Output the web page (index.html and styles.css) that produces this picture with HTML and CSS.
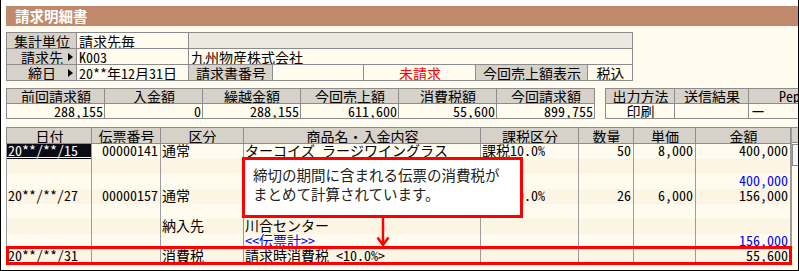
FILE: index.html
```html
<!DOCTYPE html>
<html lang="ja">
<head>
    <meta charset="UTF-8">
    <title>請求明細書</title>
    <link rel="stylesheet" href="styles.css">
</head>
<body>
<div class="frame">
    <div class="panel">
        <div class="titlebar">請求明細書</div>

        <!-- header info -->
        <table class="grid info">
            <colgroup>
                <col class="w70"><col class="w112"><col class="w84"><col class="w91"><col class="w112"><col class="w112"><col class="w45">
            </colgroup>
            <tr>
                <th class="lbl">集計単位</th>
                <td>請求先毎</td>
                <td class="pale" colspan="5"></td>
            </tr>
            <tr>
                <th class="lbl arrow">請求先</th>
                <td>K003</td>
                <td colspan="5">九州物産株式会社</td>
            </tr>
            <tr>
                <th class="lbl arrow">締日</th>
                <td>20**年12月31日</td>
                <th class="lbl">請求書番号</th>
                <td></td>
                <td class="center red">未請求</td>
                <th class="lbl">今回売上額表示</th>
                <td class="center">税込</td>
            </tr>
        </table>

        <!-- totals -->
        <div class="totals">
            <table class="grid sums">
                <colgroup>
                    <col class="w98"><col class="w98"><col class="w98"><col class="w98"><col class="w98"><col class="w98">
                </colgroup>
                <tr>
                    <th class="lbl">前回請求額</th>
                    <th class="lbl">入金額</th>
                    <th class="lbl">繰越金額</th>
                    <th class="lbl">今回売上額</th>
                    <th class="lbl">消費税額</th>
                    <th class="lbl">今回請求額</th>
                </tr>
                <tr>
                    <td class="right">288,155</td>
                    <td class="right">0</td>
                    <td class="right">288,155</td>
                    <td class="right">611,600</td>
                    <td class="right">55,600</td>
                    <td class="right">899,755</td>
                </tr>
            </table>
            <table class="grid output">
                <colgroup>
                    <col class="w69"><col class="w74"><col class="w102">
                </colgroup>
                <tr>
                    <th class="lbl">出力方法</th>
                    <th class="lbl">送信結果</th>
                    <th class="lbl">Peppol</th>
                </tr>
                <tr>
                    <td class="center">印刷</td>
                    <td></td>
                    <td>ー</td>
                </tr>
            </table>
        </div>

        <!-- detail lines -->
        <div class="detail">
            <table class="grid lines">
                <colgroup>
                    <col class="w85"><col class="w69"><col class="w83"><col class="w237"><col class="w98"><col class="w55"><col class="w62"><col class="w95">
                </colgroup>
                <thead>
                    <tr>
                        <th class="lbl">日付</th>
                        <th class="lbl">伝票番号</th>
                        <th class="lbl">区分</th>
                        <th class="lbl">商品名・入金内容</th>
                        <th class="lbl">課税区分</th>
                        <th class="lbl">数量</th>
                        <th class="lbl">単価</th>
                        <th class="lbl">金額</th>
                    </tr>
                </thead>
                <tbody>
                    <tr>
                        <td class="sel">20**/**/15</td>
                        <td class="right">00000141</td>
                        <td>通常</td>
                        <td>ターコイズ ラージワイングラス</td>
                        <td>課税10.0%</td>
                        <td class="right">50</td>
                        <td class="right">8,000</td>
                        <td class="right">400,000</td>
                    </tr>
                    <tr class="alt">
                        <td></td><td></td><td></td><td></td><td></td><td></td><td></td><td></td>
                    </tr>
                    <tr>
                        <td></td><td></td><td></td><td></td><td></td><td></td><td></td>
                        <td class="right blue">400,000</td>
                    </tr>
                    <tr class="alt">
                        <td>20**/**/27</td>
                        <td class="right">00000157</td>
                        <td>通常</td>
                        <td>ターコイズ ショットグラス</td>
                        <td>課税10.0%</td>
                        <td class="right">26</td>
                        <td class="right">6,000</td>
                        <td class="right">156,000</td>
                    </tr>
                    <tr>
                        <td></td><td></td><td></td><td></td><td></td><td></td><td></td><td></td>
                    </tr>
                    <tr class="alt">
                        <td></td><td></td>
                        <td>納入先</td>
                        <td>川合センター</td>
                        <td></td><td></td><td></td><td></td>
                    </tr>
                    <tr>
                        <td></td><td></td><td></td>
                        <td class="blue">&lt;&lt;伝票計&gt;&gt;</td>
                        <td></td><td></td><td></td>
                        <td class="right blue">156,000</td>
                    </tr>
                    <tr class="alt">
                        <td>20**/**/31</td>
                        <td></td>
                        <td>消費税</td>
                        <td>請求時消費税 &lt;10.0%&gt;</td>
                        <td></td><td></td><td></td>
                        <td class="right">55,600</td>
                    </tr>
                </tbody>
            </table>
            <div class="vscroll">
                <div class="vscroll-head"></div>
                <div class="vscroll-thumb"></div>
            </div>
        </div>

        <!-- annotation -->
        <div class="callout">締切の期間に含まれる伝票の消費税が<br>まとめて計算されています。</div>
        <svg class="pointer" width="20" height="30" viewBox="0 0 20 30">
            <line x1="7" y1="0" x2="7" y2="27" stroke="#f00" stroke-width="2.5"/>
            <polyline points="1.5,19.5 7,27 12.5,19.5" fill="none" stroke="#f00" stroke-width="2.5"/>
        </svg>
        <div class="mark"></div>
    </div>
</div>
</body>
</html>
```

FILE: styles.css
```css
* {
    box-sizing: border-box;
}

body {
    margin: 0;
    background: #fff;
    font-family: "Noto Sans Mono CJK JP", "Noto Sans CJK JP", monospace;
    font-size: 14px;
    color: #000;
}

.frame {
    width: 799px;
    height: 271px;
    border: 1px solid #000;
    border-top: 0;
    padding: 6px 0 0 5px;
    overflow: hidden;
}

.panel {
    position: relative;
    height: 100%;
    background: #fffbee;
    overflow: hidden;
}

.titlebar {
    height: 20px;
    background: #c0896b;
    color: #fff;
    font-family: "Noto Sans CJK JP", sans-serif;
    font-weight: bold;
    font-size: 14.5px;
    line-height: 20px;
    padding-left: 9px;
}

/* tables */
table.grid {
    border-collapse: collapse;
    table-layout: fixed;
}

.grid td,
.grid th {
    border: 1px solid #8c8c8c;
    height: 15px;
    padding: 0 1px 0 2px;
    line-height: 14px;
    font-weight: normal;
    white-space: nowrap;
    overflow: hidden;
    text-align: left;
}

.grid th.lbl {
    background: #d6d2ca;
    text-align: center;
}

.info {
    margin-top: 6px;
    width: 626px;
}

.info td,
.info th {
    height: 16px;
}

.arrow {
    position: relative;
}

.arrow::after {
    content: "";
    position: absolute;
    right: 3px;
    top: 4px;
    border-left: 5px solid #000;
    border-top: 4px solid transparent;
    border-bottom: 4px solid transparent;
}

.pale {
    background: #ece9e1;
}

.center { text-align: center !important; }
.right { text-align: right !important; }
.red { color: #f00; }
.blue { color: #00f; }

.totals {
    display: flex;
    gap: 10px;
    margin-top: 7px;
}

.sums { width: 588px; }
.output { width: 245px; flex: none; }

.w45 { width: 45px; }
.w55 { width: 55px; }
.w62 { width: 62px; }
.w69 { width: 69px; }
.w70 { width: 70px; }
.w74 { width: 74px; }
.w83 { width: 83px; }
.w84 { width: 84px; }
.w85 { width: 85px; }
.w91 { width: 91px; }
.w95 { width: 95px; }
.w98 { width: 98px; }
.w102 { width: 102px; }
.w112 { width: 112px; }
.w237 { width: 237px; }

/* detail list */
.detail {
    display: flex;
    margin-top: 8px;
}

.lines {
    width: 784px;
    flex: none;
}

.lines thead th {
    height: 16px;
}

.lines tbody tr {
    height: 15px;
}

.lines tbody td {
    height: 15px;
    line-height: 13px;
    border-top: 0;
    border-bottom: 0;
    border-color: #9c9c9c;
    padding: 0 2px 2px 1px;
}

.lines tbody tr:last-child td {
    border-bottom: 1px solid #9c9c9c;
}

.lines tr.alt td {
    background: #fcf5e4;
}

.lines td.sel {
    background: #0b0b16 !important;
    color: #fff;
    box-shadow: inset 0 -1px 0 #000, inset 0 -2px 0 #fffbee;
}

.vscroll {
    width: 7px;
    flex: none;
    border-left: 1px solid #9c9c9c;
}

.vscroll-head {
    height: 16px;
    background: #d6d2ca;
    border-top: 1px solid #8c8c8c;
    border-bottom: 1px solid #8c8c8c;
}

.vscroll-thumb {
    height: 22px;
    margin-top: 1px;
    background: #f4f4f4;
    border: 1px solid #8c8c8c;
    border-right: 0;
}

/* annotation overlays */
.callout {
    position: absolute;
    left: 236px;
    top: 151px;
    width: 281px;
    height: 61px;
    background: #fff;
    border: 3px solid #f00;
    padding: 5px 0 0 8px;
    font-family: "Noto Sans CJK JP", sans-serif;
    font-size: 14.5px;
    line-height: 19px;
    color: #222;
}

.pointer {
    position: absolute;
    left: 370px;
    top: 212px;
}

.mark {
    position: absolute;
    left: 0;
    top: 240px;
    width: 786px;
    height: 19px;
    border: 3px solid #f00;
}
```
